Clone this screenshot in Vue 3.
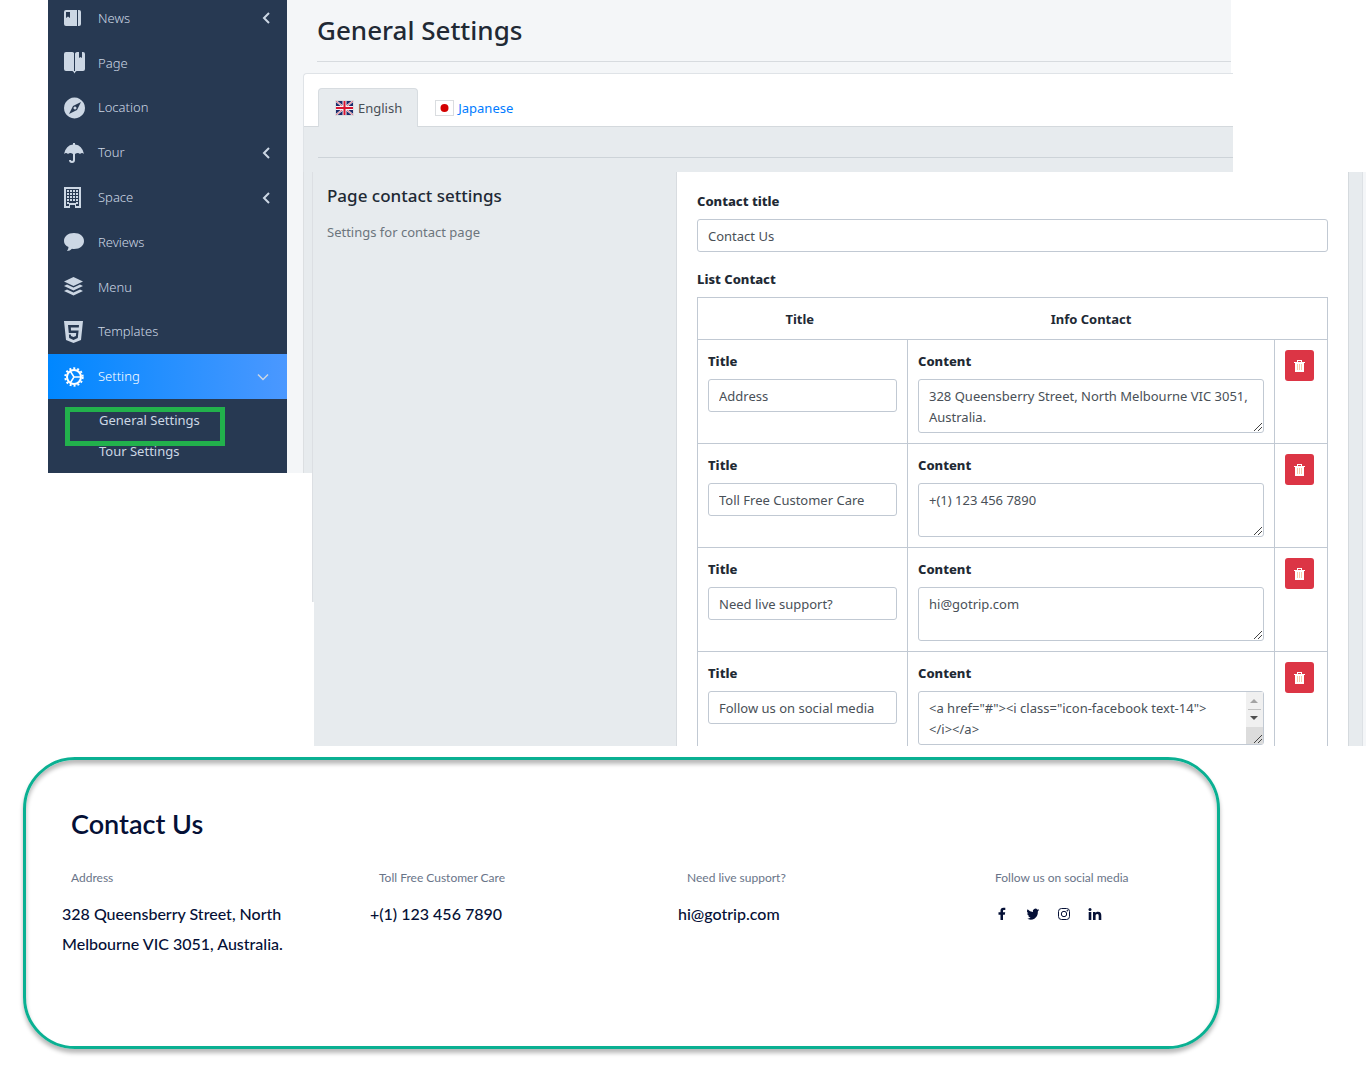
<script setup>
import { ref } from 'vue'

const menu = [
  { label: 'News', icon: 'news', arrow: true },
  { label: 'Page', icon: 'page' },
  { label: 'Location', icon: 'compass' },
  { label: 'Tour', icon: 'umbrella', arrow: true },
  { label: 'Space', icon: 'building', arrow: true },
  { label: 'Reviews', icon: 'comment' },
  { label: 'Menu', icon: 'layers' },
  { label: 'Templates', icon: 'html5' },
  { label: 'Setting', icon: 'gear', open: true },
]

const contactTitle = ref('Contact Us')
const contacts = ref([
  { id: 1, title: 'Address', content: '328 Queensberry Street, North Melbourne VIC 3051, Australia.' },
  { id: 2, title: 'Toll Free Customer Care', content: '+(1) 123 456 7890' },
  { id: 3, title: 'Need live support?', content: 'hi@gotrip.com' },
  {
    id: 4,
    title: 'Follow us on social media',
    content: '<a href="#"><i class="icon-facebook text-14">\n</i></a>',
    scroll: true,
  },
])

function removeContact(id) {
  contacts.value = contacts.value.filter((c) => c.id !== id)
}
</script>

<template>
  <div class="page">
    <div class="admin">
      <aside class="sidebar">
        <nav aria-label="Main">
          <ul class="menu">
            <li v-for="item in menu" :key="item.label">
              <a href="#" :class="['menu-link', { active: item.open }]">
                <svg class="menu-icon" viewBox="0 0 22 22" aria-hidden="true">
                  <g v-if="item.icon === 'news'">
                    <path fill-rule="evenodd" d="M2 3h11v16H2q-2 0-2-2V5q0-2 2-2zM2 5v6l2-1.500 2 1.500V5z" />
                    <path d="M14 3h1q2 0 2 2v12q0 2-2 2h-1z" />
                  </g>
                  <g v-else-if="item.icon === 'page'">
                    <path d="M2 0h6q1.500 0 2 1v18.500q-1-.500-2-.500H2q-2 0-2-2V2q0-2 2-2z" />
                    <path d="M11 1.500Q11.500 0 13 0h2v6l1.500-1L18 6V0h1q2 0 2 2v15q0 2-2 2h-6q-1 0-2 .500z" />
                    <path d="m9 19 1.500 2.500L12 19z" />
                  </g>
                  <path v-else-if="item.icon === 'compass'" fill-rule="evenodd" d="M10.500.500a10.500 10.500 0 1 0 .010 0zM17 5l-4 8-8 4 4-8zM11 9.500a1.500 1.500 0 1 0 .010 0z" />
                  <g v-else-if="item.icon === 'umbrella'">
                    <path d="M0 12Q2 3 9 2.500V1h2v1.500q7 .500 9 9.500-2-2-4 0-2-2-5 0-1-1-2 0-3-2-5 0-2-2-4 0z" />
                    <path class="line" d="M10 10v8q0 2-2 2t-2-2" />
                  </g>
                  <path v-else-if="item.icon === 'building'" fill-rule="evenodd" d="M0 0h17v21h-6v-3H6v3H0zM2 2v17h3v-3h7v3h3V2zM3 3h2v2H3zM6 3h2v2H6zM9 3h2v2H9zM12 3h2v2h-2zM3 6h2v2H3zM6 6h2v2H6zM9 6h2v2H9zM12 6h2v2h-2zM3 9h2v2H3zM6 9h2v2H6zM9 9h2v2H9zM12 9h2v2h-2zM3 12h2v2H3zM6 12h2v2H6zM9 12h2v2H9zM12 12h2v2h-2zM3 15h2v2H3zM12 15h2v2h-2z" />
                  <path v-else-if="item.icon === 'comment'" d="M10 2c6 0 10 3.500 10 8s-4 8-10 8q-1 0-2-.200-2 2.200-5 2.200 1.500-2 1.500-4Q0 14 0 10c0-4.500 4-8 10-8z" />
                  <g v-else-if="item.icon === 'layers'">
                    <path d="M9.500 1 19 5.500 9.500 10 0 5.500z" />
                    <path d="m0 10 3-1.500 6.500 3 6.500-3 3 1.500-9.500 4.500z" />
                    <path d="m0 15 3-1.500 6.500 3 6.500-3 3 1.500-9.500 4.500z" />
                  </g>
                  <path v-else-if="item.icon === 'html5'" fill-rule="evenodd" d="M0 0h19l-2 19-7.500 3L2 19zM4 4l.800 8h7.400l-.300 3-2.400 1-2.500-1-.200-1.500H4.900l.300 3.500L9.500 19l4.300-2 .800-7.500H7L6.800 6.500h8L15 4z" />
                  <g v-else>
                    <circle class="teeth" cx="10" cy="11" r="8.700" />
                    <circle class="line" cx="10" cy="11" r="7" />
                    <path class="spoke" d="M10 11h6M10 11 6.500 5.500M10 11l-3.500 5.500" />
                  </g>
                </svg>
                <span class="menu-label">{{ item.label }}</span>
                <svg v-if="item.arrow" class="arrow" viewBox="0 0 12 12" aria-hidden="true"><path d="m9 1-5 5 5 5" /></svg>
                <svg v-if="item.open" class="arrow down" viewBox="0 0 12 12" aria-hidden="true"><path d="m1 3.500 5 5 5-5" /></svg>
              </a>
            </li>
          </ul>
          <ul class="submenu">
            <li class="marked"><a href="#">General Settings</a></li>
            <li><a href="#">Tour Settings</a></li>
          </ul>
        </nav>
      </aside>

      <main class="main">
        <header class="page-head">
          <h1>General Settings</h1>
        </header>

        <div class="tab-area">
          <div class="tab-card">
            <nav class="tabs" aria-label="Language">
              <a href="#" class="tab current">
                <svg class="flag" viewBox="0 0 17 14" aria-hidden="true">
                  <path fill="#1b2b6b" d="M0 0h17v14H0z" />
                  <path stroke="#f2f2f6" stroke-width="2" d="m0 0 17 14M17 0 0 14" />
                  <path stroke="#d8142f" stroke-width=".6" d="m0 0 17 14M17 0 0 14" />
                  <path stroke="#f2f2f6" stroke-width="4" d="M8.500 0v14M0 7h17" />
                  <path stroke="#d8142f" stroke-width="2" d="M8.500 0v14M0 7h17" />
                </svg>
                English
              </a>
              <a href="#" class="tab">
                <svg class="flag" viewBox="0 0 17 14" aria-hidden="true">
                  <path fill="#fff" d="M0 0h17v14H0z" />
                  <circle cx="8.500" cy="7" r="4" fill="#d30000" />
                </svg>
                Japanese
              </a>
            </nav>
            <div class="tab-body"><hr /></div>
          </div>
        </div>

        <section class="settings">
          <div class="gutter-left"></div>
          <div class="intro">
            <div class="intro-text">
              <h2>Page contact settings</h2>
              <p>Settings for contact page</p>
            </div>
            <div class="intro-rest"></div>
          </div>
          <form class="form" @submit.prevent>
            <label for="contact-title">Contact title</label>
            <input id="contact-title" v-model="contactTitle" class="control" type="text" />
            <h3>List Contact</h3>
            <table>
              <colgroup><col class="col-title" /><col /><col class="col-action" /></colgroup>
              <thead>
                <tr><th>Title</th><th>Info Contact</th><td></td></tr>
              </thead>
              <tbody>
                <tr v-for="c in contacts" :key="c.id">
                  <td>
                    <label :for="'title-' + c.id">Title</label>
                    <input :id="'title-' + c.id" v-model="c.title" class="control" type="text" />
                  </td>
                  <td>
                    <label :for="'content-' + c.id">Content</label>
                    <div class="area">
                      <textarea :id="'content-' + c.id" v-model="c.content" class="control" rows="2"></textarea>
                      <svg v-if="c.scroll" class="scroll" viewBox="0 0 17 52" aria-hidden="true">
                        <path fill="#f0f0f0" d="M0 0h17v52H0z" />
                        <path fill="#a3a3a3" d="m4 11 4-4 4 4z" />
                        <path fill="#c1c1c1" d="M2 17h13v1H2z" />
                        <path fill="#505050" d="m4 24 4 4 4-4z" />
                        <path fill="#dcdcdc" d="M0 35h17v17H0z" />
                      </svg>
                      <svg class="grip" viewBox="0 0 9 9" aria-hidden="true"><path d="m0 8 8-8M4 8l4-4" /></svg>
                    </div>
                  </td>
                  <td>
                    <button class="delete" type="button" aria-label="Delete" @click="removeContact(c.id)">
                      <svg viewBox="0 0 11 12" aria-hidden="true">
                        <path fill="#fff" d="M3 0h5v2h3v1h-1v9H1V3H0V2h3z" />
                        <path fill="#dc3545" d="M4 1h3v1H4z" />
                        <path stroke="#f8c8a8" d="M3.500 4v6M5.500 4v6M7.500 4v6" />
                      </svg>
                    </button>
                  </td>
                </tr>
              </tbody>
            </table>
          </form>
          <div class="gutter-right"></div>
        </section>
      </main>
    </div>

    <section class="contact">
      <h2>Contact Us</h2>
      <div class="contact-grid">
        <div>
          <h3>Address</h3>
          <p>328 Queensberry Street, North Melbourne VIC 3051, Australia.</p>
        </div>
        <div>
          <h3>Toll Free Customer Care</h3>
          <p><a href="#">+(1) 123 456 7890</a></p>
        </div>
        <div>
          <h3>Need live support?</h3>
          <p><a href="#">hi@gotrip.com</a></p>
        </div>
        <div>
          <h3>Follow us on social media</h3>
          <div class="social">
            <a href="#" aria-label="Facebook">
              <svg viewBox="0 0 14 14"><path d="M5.500 13V7.700H3.500V5.300h2V3.800C5.500 2 6.500.800 8.300.800h2v2.300H9c-.700 0-1 .400-1 1v1.200h2.200l-.400 2.400H8V13z" /></svg>
            </a>
            <a href="#" aria-label="Twitter">
              <svg viewBox="0 0 14 14"><path d="M13.200 2.900q-.600.300-1.300.400.700-.500 1-1.200-.700.400-1.500.600A2.500 2.500 0 0 0 7 5Q3.800 4.900 1.600 2.300 0 4.900 2.400 6.500L1.200 6.200q0 2 2.100 2.600l-1.200.050q.600 1.600 2.500 1.700Q3 12 .700 11.600 4.700 13.700 8.400 11.700 12 9.500 11.900 4.300q.800-.600 1.300-1.400z" /></svg>
            </a>
            <a href="#" aria-label="Instagram">
              <svg viewBox="0 0 14 14"><g class="outline"><rect x="1.500" y="1.500" width="11" height="11" rx="3" /><circle cx="7" cy="7" r="2.700" /></g><circle cx="10.300" cy="3.800" r=".8" /></svg>
            </a>
            <a href="#" aria-label="LinkedIn">
              <svg viewBox="0 0 14 14"><circle cx="2" cy="2.500" r="1.500" /><path d="M.700 5h2.600v8H.700zM5 5h2.500v1.100C8 5.300 8.900 4.800 10 4.800c2.500 0 3.300 1.500 3.300 4V13h-2.600V9.300c0-1.300-.300-2.200-1.400-2.200-1.300 0-1.700.900-1.700 2.200V13H5z" /></svg>
            </a>
          </div>
        </div>
      </div>
    </section>
  </div>
</template>

<style>
body {
  margin: 0;
  background: #fff;
}
</style>

<style scoped>
*,
*::after {
  box-sizing: border-box;
}
h1, h2, h3, p, ul {
  margin: 0;
  padding: 0;
}
ul {
  list-style: none;
}
a {
  color: inherit;
  text-decoration: none;
}
.page {
  font-family: "Noto Sans", "Open Sans", sans-serif;
  font-size: 13px;
  line-height: 21px;
  color: #212934;
}
.admin {
  display: flex;
  align-items: flex-start;
  padding-left: 48px;
}

/* sidebar */
.sidebar {
  flex: 0 0 239px;
  overflow: hidden;
  background: #273952;
  color: #ccd7e4;
}
.menu {
  display: flex;
  flex-direction: column;
  height: 403px;
  margin-top: -4px;
  font-weight: 300;
}
.menu li {
  flex: 1;
  display: flex;
}
.menu-link {
  flex: 1;
  display: flex;
  align-items: center;
  gap: 12px;
  padding: 0 15px 0 16px;
}
.menu-link.active {
  background: linear-gradient(90deg, #0087ff, #4b98ff);
  color: #fff;
}
.menu-icon {
  width: 22px;
  height: 22px;
  fill: currentColor;
}
.menu-icon .line,
.menu-icon .teeth,
.menu-icon .spoke {
  fill: none;
  stroke: currentColor;
  stroke-width: 2;
}
.menu-icon .teeth {
  stroke-dasharray: 2 2;
}
.menu-icon .spoke {
  stroke-width: 1.5;
}
.menu-label {
  flex: 1;
}
.arrow {
  width: 12px;
  height: 12px;
  fill: none;
  stroke: #ccd7e4;
  stroke-width: 2;
}
.arrow.down {
  margin-right: 3px;
  stroke-width: 1.5;
}
.submenu {
  padding: 6px 0;
}
.submenu li {
  position: relative;
  padding-left: 51px;
  line-height: 31px;
}
.marked::after {
  content: "";
  position: absolute;
  top: 2px;
  left: 17px;
  width: 160px;
  height: 39px;
  border: 5px solid #22b14c;
  pointer-events: none;
}
.submenu a {
  position: relative;
  z-index: 1;
}

/* main column */
.main {
  flex: 1;
  min-width: 0;
}
.page-head {
  margin-right: 135px;
  padding: 0 0 11px 30px;
  background: #f4f6f8;
}
.page-head h1 {
  height: 62px;
  border-bottom: 1px solid #d7dbdf;
  font-size: 26px;
  font-weight: 500;
  line-height: 60px;
}
.tab-area {
  margin-right: 133px;
  padding-left: 16px;
  background: linear-gradient(90deg, #f4f6f8 24px, #fff 24px);
}
.tab-card {
  border: solid #dfe3e7;
  border-width: 1px 0 0 1px;
  border-radius: 4px 0 0;
  background: #fff;
}
.tabs {
  display: flex;
  padding: 14px 14px 0;
}
.tab {
  display: flex;
  align-items: center;
  gap: 4px;
  height: 39px;
  margin-bottom: -1px;
  padding: 0 15px 0 16px;
  border: 1px solid transparent;
  border-bottom: 0;
  border-radius: 4px 4px 0 0;
  color: #007bff;
}
.tab.current {
  z-index: 1;
  border-color: #d7dce0;
  background: #e7ebee;
  color: #495057;
}
.flag {
  width: 19px;
  height: 16px;
  border: 1px solid #dadde0;
}
.tab-body {
  height: 46px;
  padding: 30px 0 0 14px;
  border-top: 1px solid #d4d9dd;
  background: #e7ebee;
}
.tab-body hr {
  margin: 0;
  border: 0;
  border-top: 1px solid #cdd3d8;
}

/* settings panel */
.settings {
  display: flex;
}
.gutter-left {
  flex: 0 0 25px;
  height: 301px;
  background: linear-gradient(90deg, #f4f6f8 16px, #dcdfe2 16px, #dcdfe2 17px, #e7ebee 17px);
}
.gutter-right {
  flex: 0 0 18px;
  background: linear-gradient(90deg, #d5dade 1px, #e7ebee 1px, #e7ebee 14px, #dde1e5 14px, #dde1e5 15px, #f4f6f8 15px);
}
.intro {
  flex: 0 0 365px;
  display: flex;
  flex-direction: column;
  border-right: 1px solid #d8dce0;
}
.intro-text {
  height: 430px;
  padding: 12px 14px;
  border-left: 1px solid #dcdfe3;
  background: #e7ebee;
}
.intro-text h2 {
  font-size: 17px;
  font-weight: 500;
  line-height: 24px;
}
.intro-text p {
  margin-top: 14px;
  color: #6c757d;
}
.intro-rest {
  flex: 1;
  margin-left: 2px;
  background: #e7ebee;
}
.form {
  flex: 1;
  min-width: 0;
  padding: 19px 20px 0;
}
.form label,
.form h3 {
  display: block;
  margin-bottom: 7px;
  font-size: 13px;
  font-weight: 800;
}
.control {
  display: block;
  width: 100%;
  height: 33px;
  margin: 0;
  padding: 0 10px;
  border: 1px solid #c1c9d3;
  border-radius: 3px;
  background: #fff;
  color: #495057;
  font: inherit;
}
.form h3 {
  margin-top: 17px;
}
textarea.control {
  height: 54px;
  padding: 6px 10px;
  overflow: hidden;
  resize: none;
}
table {
  width: 100%;
  table-layout: fixed;
  border-collapse: collapse;
}
.col-title {
  width: 210px;
}
.col-action {
  width: 53px;
}
tr,
tbody td {
  border: 1px solid #c1c9d3;
}
thead tr {
  height: 42px;
}
th {
  padding: 2px 0 0;
  font-weight: 700;
}
th:first-child {
  padding-right: 6px;
}
tbody td {
  padding: 11px 10px 10px;
  vertical-align: top;
}
tbody td:last-child {
  padding-top: 10px;
}
tbody tr:last-child,
tbody tr:last-child td {
  padding-bottom: 1px;
  border-bottom: 0;
}
.area {
  position: relative;
}
.scroll {
  position: absolute;
  top: 1px;
  right: 1px;
  width: 17px;
  height: 52px;
}
.grip {
  position: absolute;
  right: 1px;
  bottom: 1px;
  width: 9px;
  height: 9px;
  stroke: #444;
}
.delete {
  display: flex;
  align-items: center;
  justify-content: center;
  width: 29px;
  height: 31px;
  padding: 0;
  border: 0;
  border-radius: 3px;
  background: #dc3545;
}
.delete svg {
  width: 11px;
  height: 12px;
}

/* public contact block */
.contact {
  margin: 11px 146px 10px 23px;
  padding: 44px 0 87px 36px;
  border: 3px solid #0ab092;
  border-radius: 52px;
  box-shadow: 0 4px 4px rgba(0, 0, 0, 0.28), inset 0 4px 4px rgba(0, 0, 0, 0.28);
  color: #051036;
  font-family: Lato, sans-serif;
}
.contact h2 {
  padding-left: 9px;
  font-size: 27px;
  font-weight: 600;
  line-height: 40px;
}
.contact-grid {
  display: grid;
  grid-template-columns: repeat(3, minmax(0, 1fr)) 231px;
  margin-top: 22px;
}
.contact h3 {
  padding-left: 9px;
  color: #697488;
  font-size: 12px;
  font-weight: 400;
  line-height: 24px;
}
.contact p {
  max-width: 240px;
  margin-top: 9px;
  font-size: 16px;
  font-weight: 500;
  line-height: 30px;
}
.social {
  display: flex;
  align-items: center;
  gap: 17px;
  height: 30px;
  margin-top: 9px;
  padding-left: 9px;
}
.social svg {
  display: block;
  width: 14px;
  height: 14px;
  fill: #051036;
}
.outline {
  fill: none;
  stroke: #051036;
  stroke-width: 1;
}
</style>
